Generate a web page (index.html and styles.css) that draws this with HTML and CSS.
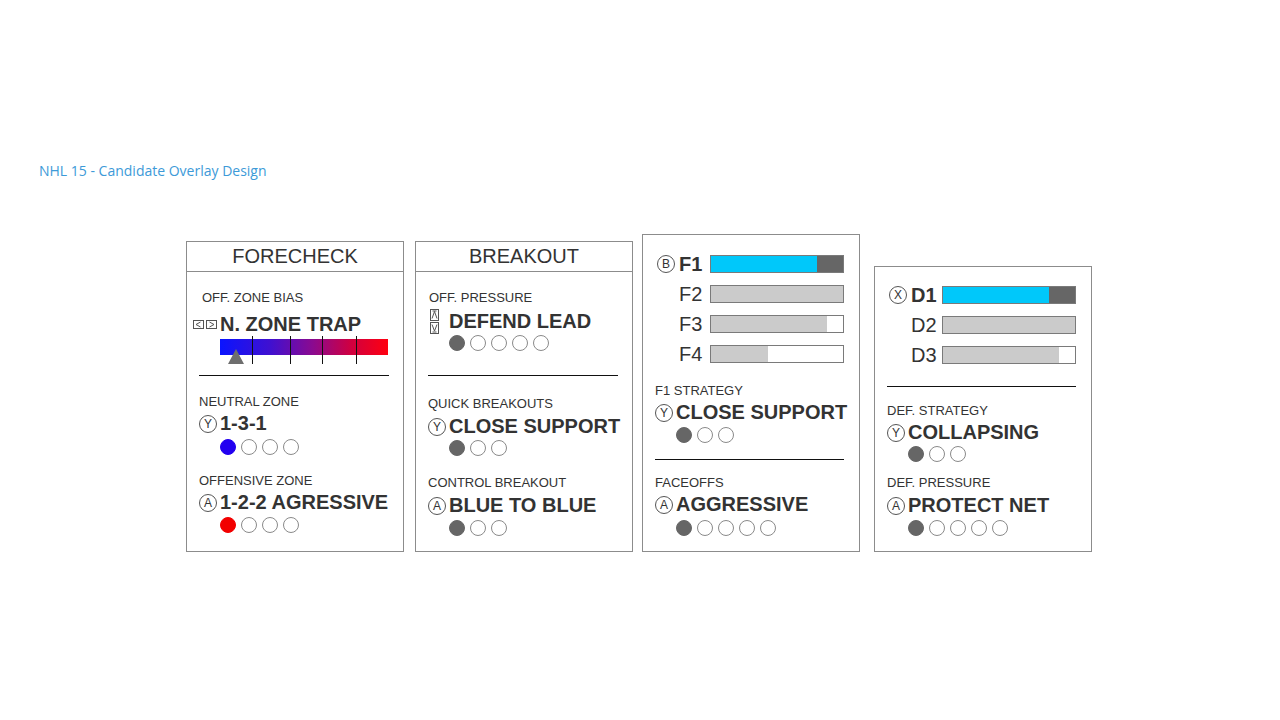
FILE: index.html
```html
<!DOCTYPE html>
<html>
<head>
<meta charset="utf-8">
<title>NHL 15 - Candidate Overlay Design</title>
<link rel="stylesheet" href="styles.css">
</head>
<body>
<div class="page">
  <h1 class="title">NHL 15 - Candidate Overlay Design</h1>
  <div class="panels">

    <section class="panel p1">
      <div class="head">FORECHECK</div>
      <div class="body">
        <div class="label l-bias">OFF. ZONE BIAS</div>
        <div class="value v-bias">
          <span class="slot slot-keys">
            <svg width="24" height="9" viewBox="0 0 24 9"><rect x="0.5" y="0.5" width="10" height="8" fill="#fff" stroke="#555"/><path d="M7.5 2 L3 4.5 L7.5 7" fill="none" stroke="#555"/><rect x="13.5" y="0.5" width="10" height="8" fill="#fff" stroke="#555"/><path d="M16.5 2 L21 4.5 L16.5 7" fill="none" stroke="#555"/></svg>
          </span>N. ZONE TRAP
        </div>
        <div class="bias">
          <div class="grad"></div>
          <span class="tick t1"></span>
          <span class="tick t2"></span>
          <span class="tick t3"></span>
          <span class="tick t4"></span>
          <span class="marker"></span>
        </div>
        <div class="rule r-p1"></div>
        <div class="label mt18">NEUTRAL ZONE</div>
        <div class="value mt3"><span class="slot"><span class="btn">Y</span></span>1-3-1</div>
        <div class="dots mt4"><span class="dot blue"></span><span class="dot"></span><span class="dot"></span><span class="dot"></span></div>
        <div class="label mt18">OFFENSIVE ZONE</div>
        <div class="value mt3"><span class="slot"><span class="btn">A</span></span>1-2-2 AGRESSIVE</div>
        <div class="dots mt3"><span class="dot red"></span><span class="dot"></span><span class="dot"></span><span class="dot"></span></div>
      </div>
    </section>

    <section class="panel p2">
      <div class="head">BREAKOUT</div>
      <div class="body">
        <div class="label l-press">OFF. PRESSURE</div>
        <div class="value mt5">
          <span class="slot slot-updown">
            <svg width="9" height="25" viewBox="0 0 9 25"><rect x="0.5" y="0.5" width="8" height="11" fill="#fff" stroke="#555"/><path d="M2 9.5 L4.5 2.5 L7 9.5 M2.5 2 H6.5" fill="none" stroke="#555"/><rect x="0.5" y="13.5" width="8" height="11" fill="#fff" stroke="#555"/><path d="M2 15.5 L4.5 22 L7 15.5 M2.5 23 H6.5" fill="none" stroke="#555"/></svg>
          </span>DEFEND LEAD
        </div>
        <div class="dots mt2"><span class="dot on"></span><span class="dot"></span><span class="dot"></span><span class="dot"></span><span class="dot"></span></div>
        <div class="rule r-p2"></div>
        <div class="label mt20">QUICK BREAKOUTS</div>
        <div class="value mt4"><span class="slot"><span class="btn">Y</span></span>CLOSE SUPPORT</div>
        <div class="dots mt2"><span class="dot on"></span><span class="dot"></span><span class="dot"></span></div>
        <div class="label mt19">CONTROL BREAKOUT</div>
        <div class="value mt4"><span class="slot"><span class="btn">A</span></span>BLUE TO BLUE</div>
        <div class="dots mt3"><span class="dot on"></span><span class="dot"></span><span class="dot"></span></div>
      </div>
    </section>

    <section class="panel p3">
      <div class="body b-lines">
        <div class="line">
          <span class="lslot"><span class="btn">B</span></span>
          <span class="lname sel">F1</span>
          <span class="bar dark"><span class="fill cyan" style="width:80%"></span></span>
        </div>
        <div class="line">
          <span class="lslot"></span>
          <span class="lname">F2</span>
          <span class="bar"><span class="fill" style="width:100%"></span></span>
        </div>
        <div class="line">
          <span class="lslot"></span>
          <span class="lname">F3</span>
          <span class="bar"><span class="fill" style="width:88%"></span></span>
        </div>
        <div class="line">
          <span class="lslot"></span>
          <span class="lname">F4</span>
          <span class="bar"><span class="fill" style="width:43%"></span></span>
        </div>
        <div class="label mt20">F1 STRATEGY</div>
        <div class="value mt3"><span class="slot"><span class="btn">Y</span></span>CLOSE SUPPORT</div>
        <div class="dots mt3"><span class="dot on"></span><span class="dot"></span><span class="dot"></span></div>
        <div class="rule r-p3"></div>
        <div class="label mt15">FACEOFFS</div>
        <div class="value mt3"><span class="slot"><span class="btn">A</span></span>AGGRESSIVE</div>
        <div class="dots mt4"><span class="dot on"></span><span class="dot"></span><span class="dot"></span><span class="dot"></span><span class="dot"></span></div>
      </div>
    </section>

    <section class="panel p4">
      <div class="body b-lines4">
        <div class="line">
          <span class="lslot"><span class="btn">X</span></span>
          <span class="lname sel">D1</span>
          <span class="bar dark"><span class="fill cyan" style="width:80%"></span></span>
        </div>
        <div class="line">
          <span class="lslot"></span>
          <span class="lname">D2</span>
          <span class="bar"><span class="fill" style="width:100%"></span></span>
        </div>
        <div class="line">
          <span class="lslot"></span>
          <span class="lname">D3</span>
          <span class="bar"><span class="fill" style="width:88%"></span></span>
        </div>
        <div class="rule r-p4"></div>
        <div class="label mt16">DEF. STRATEGY</div>
        <div class="value mt3"><span class="slot"><span class="btn">Y</span></span>COLLAPSING</div>
        <div class="dots mt2"><span class="dot on"></span><span class="dot"></span><span class="dot"></span></div>
        <div class="label mt13">DEF. PRESSURE</div>
        <div class="value mt4"><span class="slot"><span class="btn">A</span></span>PROTECT NET</div>
        <div class="dots mt3"><span class="dot on"></span><span class="dot"></span><span class="dot"></span><span class="dot"></span><span class="dot"></span></div>
      </div>
    </section>

  </div>
</div>
</body>
</html>
```

FILE: styles.css
```css
* { box-sizing: border-box; }
html, body { margin: 0; padding: 0; background: #fff; }
body { font-family: "Liberation Sans", Arial, sans-serif; color: #333; }

.page { width: 1280px; height: 720px; padding-top: 161px; }

.title {
  margin: 0 0 0 39px;
  font-family: "Open Sans", "Liberation Sans", sans-serif;
  font-weight: 400;
  font-size: 14px;
  line-height: 20px;
  color: #3d9ad8;
}

.panels {
  display: flex;
  align-items: flex-end;
  margin: 53px 0 0 186px;
}

.panel {
  width: 218px;
  border: 1px solid #8c8c8c;
  background: #fff;
  flex: none;
}
.p1 { height: 311px; }
.p2 { height: 311px; margin-left: 11px; }
.p3 { height: 318px; margin-left: 9px; }
.p4 { height: 286px; margin-left: 14px; }

.head {
  height: 30px;
  line-height: 29px;
  border-bottom: 1px solid #8c8c8c;
  text-align: center;
  font-size: 20px;
  color: #333;
}

.body { padding: 18px 14px 0 12px; }
.b-lines { padding-top: 20px; }
.b-lines4 { padding-top: 19px; }

.label {
  font-size: 13px;
  line-height: 15px;
  color: #333;
  white-space: nowrap;
}
.l-bias { margin-left: 3px; }
.l-press { margin-left: 1px; }

.value {
  display: flex;
  align-items: center;
  height: 23px;
  font-size: 20px;
  font-weight: 700;
  color: #333;
  white-space: nowrap;
}
.v-bias { margin-top: 8px; }

.slot {
  flex: none;
  width: 21px;
  height: 23px;
  display: flex;
  align-items: center;
}
.slot-keys { width: 27px; margin-left: -6px; }
.slot-keys svg { display: block; }
.slot-updown { padding-left: 2px; }
.slot-updown svg { display: block; }

.btn {
  display: block;
  width: 18px;
  height: 18px;
  border: 1px solid #555;
  border-radius: 50%;
  font-size: 12px;
  font-weight: 400;
  line-height: 16px;
  text-align: center;
  color: #333;
}

.dots { display: flex; gap: 5px; margin-left: 21px; height: 16px; }
.dot {
  width: 16px;
  height: 16px;
  border: 1px solid #8a8a8a;
  border-radius: 50%;
  background: #fff;
  flex: none;
}
.dot.on { background: #666; border-color: #666; }
.dot.blue { background: #2200f0; border-color: #2200f0; }
.dot.red { background: #f20000; border-color: #f20000; }

.bias {
  position: relative;
  margin-left: 21px;
  width: 168px;
  height: 29px;
  padding-top: 3px;
}
.grad {
  height: 16px;
  background: linear-gradient(to right, #0a14ff 0%, #4010d0 30%, #8a0a90 55%, #d00040 78%, #ff0010 100%);
}
.tick {
  position: absolute;
  top: 0;
  width: 1px;
  height: 28px;
  background: #111;
}
.t1 { left: 32px; }
.t2 { left: 70px; }
.t3 { left: 102px; }
.t4 { left: 136px; }
.marker {
  position: absolute;
  left: 8px;
  top: 13px;
  width: 0;
  height: 0;
  border-left: 8px solid transparent;
  border-right: 8px solid transparent;
  border-bottom: 15px solid #6e6e6e;
}

.rule { height: 1px; background: #111; }
.r-p1 { margin-top: 10px; }
.r-p2 { margin-top: 24px; }
.r-p3 { margin-top: 16px; width: 189px; }
.r-p4 { margin-top: 22px; width: 189px; }

.line {
  display: flex;
  align-items: center;
  height: 18px;
  padding-left: 2px;
  margin-bottom: 12px;
}
.line:nth-child(4) { margin-bottom: 0; }
.b-lines4 .line:nth-child(3) { margin-bottom: 0; }
.lslot { flex: none; width: 22px; display: flex; align-items: center; }
.lname {
  flex: none;
  width: 31px;
  font-size: 20px;
  line-height: 23px;
  color: #333;
}
.lname.sel { font-weight: 700; }
.bar {
  flex: none;
  display: block;
  width: 134px;
  height: 18px;
  border: 1px solid #7a7a7a;
  background: #fff;
}
.bar.dark { background: #666; }
.fill { display: block; height: 100%; background: #cbcbcb; }
.fill.cyan { background: #00c8fa; }

.mt2 { margin-top: 2px; }
.mt3 { margin-top: 3px; }
.mt4 { margin-top: 4px; }
.mt5 { margin-top: 5px; }
.mt13 { margin-top: 13px; }
.mt15 { margin-top: 15px; }
.mt16 { margin-top: 16px; }
.mt18 { margin-top: 18px; }
.mt19 { margin-top: 19px; }
.mt20 { margin-top: 20px; }
```
